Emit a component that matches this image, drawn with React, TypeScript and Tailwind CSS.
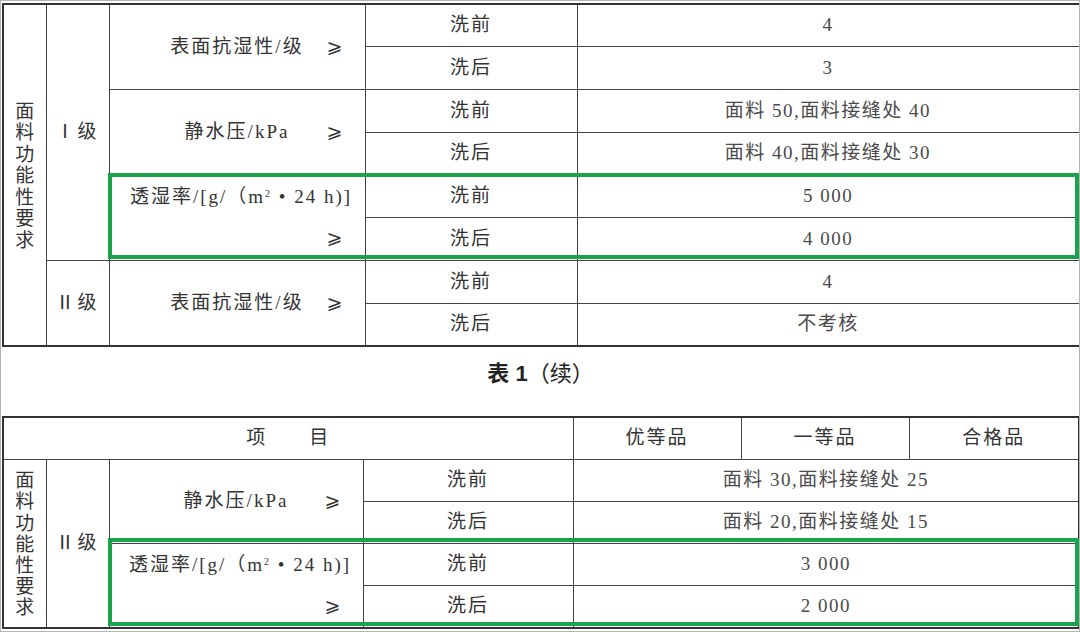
const serif = "font-['Liberation_Serif','Noto_Sans_CJK_SC','DejaVu_Sans',serif]";

const td = 'border border-[#444] p-0 text-center align-middle';

const Vert = ({ text, lh }: { text: string; lh: string }) => (
  <div className={`flex flex-col items-center pt-[2px] ${lh}`}>
    {text.split('').map((c, i) => (
      <span key={i}>{c}</span>
    ))}
  </div>
);

const Label = ({ text }: { text: string }) => (
  <div className="grid grid-cols-[1fr_auto_1fr] items-center tracking-[2px]">
    <span />
    <span>{text}</span>
    <span className="justify-self-end pr-[20px]">⩾</span>
  </div>
);

const Moisture = () => (
  <div className="flex flex-col tracking-[2px]">
    <span className="text-center pl-[8px] whitespace-nowrap">
      透湿率/[g/（m<sup className="text-[10px] -top-[0.6em]">2</sup> • 24 h)]
    </span>
    <span className="text-right pr-[20px] mt-[12px]">⩾</span>
  </div>
);

const Wash = ({ t }: { t: string }) => <span className="tracking-[2px]">{t}</span>;

const Val = ({ t }: { t: string }) => <span className="tracking-[1.5px] text-[#4a4a4a]">{t}</span>;

export default function App() {
  return (
    <div className={`w-[1080px] h-[632px] box-border border border-[#b4b4b4] bg-white pl-[1px] pt-[2px] overflow-hidden text-[19px] text-[#333] ${serif}`}>
      {/* 表 1 */}
      <div className="relative">
        <table className="border-collapse table-fixed w-[1076px] border-2 border-r border-[#333] border-r-[#9a9a9a]">
          <colgroup>
            <col className="w-[43px]" />
            <col className="w-[63px]" />
            <col className="w-[256px]" />
            <col className="w-[212px]" />
            <col className="w-[502px]" />
          </colgroup>
          <tbody>
            <tr className="h-[42.75px]">
              <td className={td} rowSpan={8}>
                <Vert text="面料功能性要求" lh="leading-[21.5px]" />
              </td>
              <td className={`${td} tracking-[3px]`} rowSpan={6}>Ⅰ级</td>
              <td className={td} rowSpan={2}><Label text="表面抗湿性/级" /></td>
              <td className={td}><Wash t="洗前" /></td>
              <td className={td}><Val t="4" /></td>
            </tr>
            <tr className="h-[42.75px]">
              <td className={td}><Wash t="洗后" /></td>
              <td className={td}><Val t="3" /></td>
            </tr>
            <tr className="h-[42.75px]">
              <td className={td} rowSpan={2}><Label text="静水压/kPa" /></td>
              <td className={td}><Wash t="洗前" /></td>
              <td className={td}><Val t="面料 50,面料接缝处 40" /></td>
            </tr>
            <tr className="h-[42.75px]">
              <td className={td}><Wash t="洗后" /></td>
              <td className={td}><Val t="面料 40,面料接缝处 30" /></td>
            </tr>
            <tr className="h-[42.75px]">
              <td className={td} rowSpan={2}><Moisture /></td>
              <td className={td}><Wash t="洗前" /></td>
              <td className={td}><Val t="5 000" /></td>
            </tr>
            <tr className="h-[42.75px]">
              <td className={td}><Wash t="洗后" /></td>
              <td className={td}><Val t="4 000" /></td>
            </tr>
            <tr className="h-[42.75px]">
              <td className={`${td} tracking-[3px]`} rowSpan={2}>Ⅱ级</td>
              <td className={td} rowSpan={2}><Label text="表面抗湿性/级" /></td>
              <td className={td}><Wash t="洗前" /></td>
              <td className={td}><Val t="4" /></td>
            </tr>
            <tr className="h-[42.75px]">
              <td className={td}><Wash t="洗后" /></td>
              <td className={td}><Val t="不考核" /></td>
            </tr>
          </tbody>
        </table>
        <div className="absolute left-[106px] top-[170px] w-[971px] h-[86px] border-[4px] border-[#1aa34c]" />
      </div>

      {/* caption */}
      <div className="h-[69px] pt-[14px] flex justify-center">
        <span className="leading-[26px] text-[22px] text-[#222] font-['Liberation_Sans','Noto_Sans_CJK_SC',sans-serif]">
          <span className="font-bold">表 1</span>（续）
        </span>
      </div>

      {/* 表 1（续） */}
      <div className="relative">
        <table className="border-collapse table-fixed w-[1076px] border-2 border-[#333]">
          <colgroup>
            <col className="w-[43px]" />
            <col className="w-[63px]" />
            <col className="w-[254px]" />
            <col className="w-[210px]" />
            <col className="w-[168px]" />
            <col className="w-[168px]" />
            <col className="w-[170px]" />
          </colgroup>
          <tbody>
            <tr className="h-[42.2px]">
              <td className={td} colSpan={4}>
                <span className="tracking-[2px]">项　　目</span>
              </td>
              <td className={td}><Wash t="优等品" /></td>
              <td className={td}><Wash t="一等品" /></td>
              <td className={td}><Wash t="合格品" /></td>
            </tr>
            <tr className="h-[42.2px]">
              <td className={td} rowSpan={4}>
                <Vert text="面料功能性要求" lh="leading-[21.2px]" />
              </td>
              <td className={`${td} tracking-[3px]`} rowSpan={4}>Ⅱ级</td>
              <td className={td} rowSpan={2}><Label text="静水压/kPa" /></td>
              <td className={td}><Wash t="洗前" /></td>
              <td className={td} colSpan={3}><Val t="面料 30,面料接缝处 25" /></td>
            </tr>
            <tr className="h-[42.2px]">
              <td className={td}><Wash t="洗后" /></td>
              <td className={td} colSpan={3}><Val t="面料 20,面料接缝处 15" /></td>
            </tr>
            <tr className="h-[42.2px]">
              <td className={td} rowSpan={2}><Moisture /></td>
              <td className={td}><Wash t="洗前" /></td>
              <td className={td} colSpan={3}><Val t="3 000" /></td>
            </tr>
            <tr className="h-[42.2px]">
              <td className={td}><Wash t="洗后" /></td>
              <td className={td} colSpan={3}><Val t="2 000" /></td>
            </tr>
          </tbody>
        </table>
        <div className="absolute left-[106px] top-[122px] w-[971px] h-[88px] border-[4px] border-[#1aa34c]" />
      </div>
    </div>
  );
}
